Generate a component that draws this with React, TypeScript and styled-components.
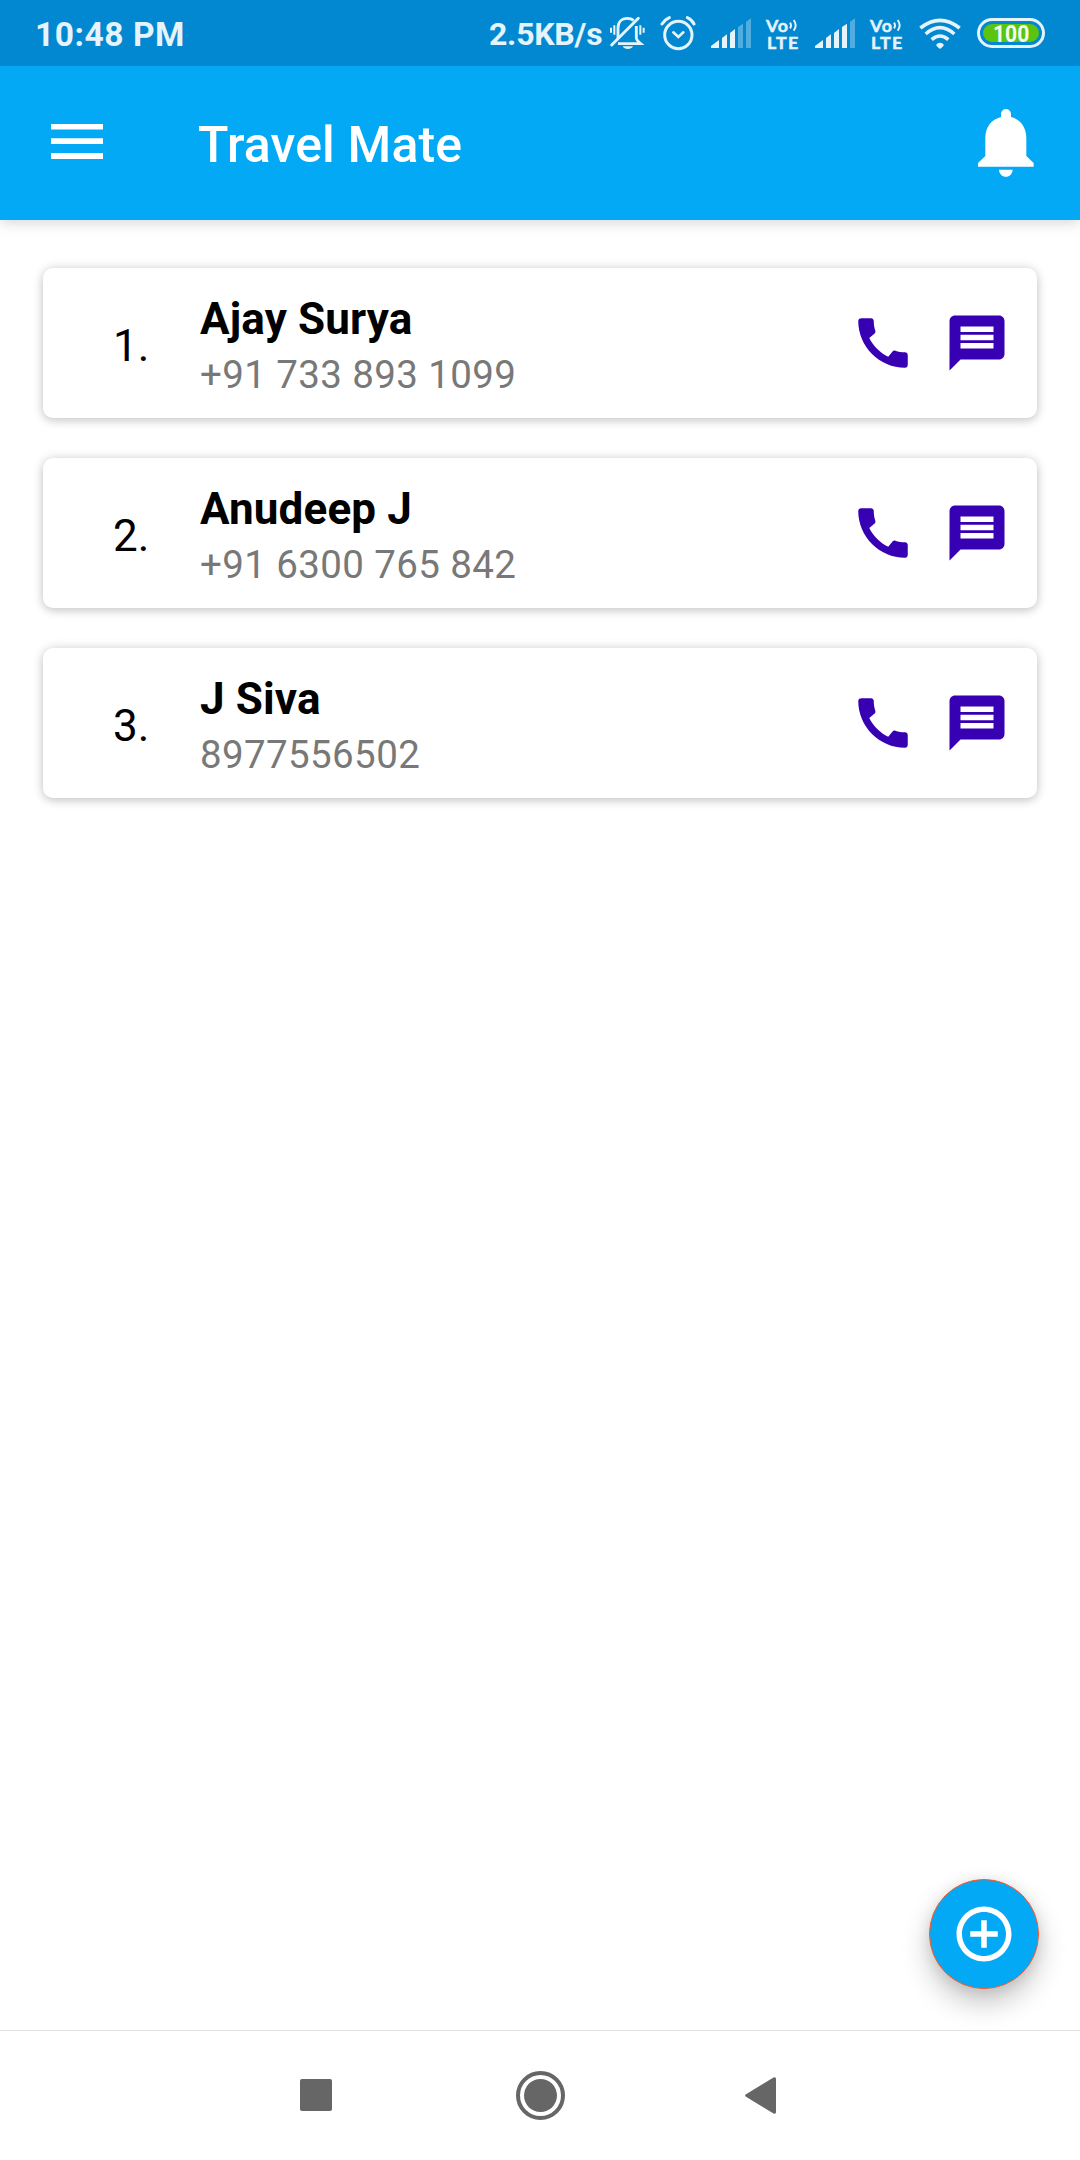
import React from "react";
import styled, { createGlobalStyle } from "styled-components";

const GlobalStyle = createGlobalStyle`
  *, *::before, *::after { box-sizing: border-box; }
  html, body { margin: 0; padding: 0; background: #fff; }
  body { font-family: Roboto, "Liberation Sans", sans-serif; }
  svg { display: block; flex: none; }
`;

const Screen = styled.div`
  width: 1080px;
  height: 2160px;
  display: flex;
  flex-direction: column;
  background: #fff;
  overflow: hidden;
`;

const StatusBar = styled.header`
  position: relative;
  z-index: 1;
  height: 66px;
  flex: none;
  display: flex;
  align-items: center;
  justify-content: space-between;
  padding: 0 35px 0 35px;
  background: #0288d1;
  color: #e6f3fa;
`;

const Clock = styled.span`
  font-size: 33.5px;
  font-weight: 700;
  line-height: 40px;
  letter-spacing: 0.55px;
  padding-top: 3px;
`;

const StatusIcons = styled.div`
  display: flex;
  align-items: center;
`;

const NetSpeed = styled.span`
  font-size: 32px;
  font-weight: 700;
  line-height: 40px;
  letter-spacing: -0.25px;
  padding-top: 2px;
  width: 121px;
  white-space: nowrap;
`;

const StatusGlyph = styled.div<{ $gap: number }>`
  margin-left: ${(p) => p.$gap}px;
`;

const Volte = styled.div`
  width: 34px;
  height: 34px;
  margin-left: 15px;
  padding-top: 1px;
  display: flex;
  flex-direction: column;
  justify-content: space-between;
  font-family: Lato, sans-serif;
  font-weight: 700;
  font-size: 17.8px;
  line-height: 16px;
  -webkit-text-stroke: 0.5px currentColor;
`;

const VolteTop = styled.div`
  height: 16px;
  display: flex;
  align-items: center;
  letter-spacing: 0.9px;
`;

const VolteBottom = styled.div`
  height: 16px;
  padding-left: 1px;
  letter-spacing: 1.3px;
  white-space: nowrap;
`;

const Battery = styled.div`
  width: 68px;
  height: 30px;
  margin-left: 16px;
  padding: 3px;
  border: 3px solid #e6f3fa;
  border-radius: 15px;
  display: flex;
`;

const BatteryLevel = styled.div`
  flex: 1;
  display: flex;
  align-items: center;
  justify-content: center;
  border-radius: 9px;
  background: #5ac411;
`;

const BatteryText = styled.span`
  padding-top: 1px;
  color: #f3faee;
  font-size: 24.5px;
  font-weight: 700;
  line-height: 18px;
  transform: scaleX(0.86);
`;

const AppBar = styled.div`
  height: 154px;
  flex: none;
  display: flex;
  align-items: center;
  padding: 0 46px 0 51px;
  background: #03a9f4;
  box-shadow: 0 2px 14px rgba(0, 0, 0, 0.18);
`;

const MenuButton = styled.div`
  width: 52px;
  margin-bottom: 3px;
`;

const Title = styled.h1`
  flex: 1;
  margin: 0 0 0 95px;
  padding-top: 3px;
  color: #fff;
  font-size: 50px;
  font-weight: 500;
  line-height: 60px;
  letter-spacing: 0.15px;
`;

const Content = styled.main`
  flex: 1;
  display: flex;
  flex-direction: column;
  justify-content: space-between;
  padding: 48px 41px 41px 43px;
`;

const ContactList = styled.div`
  display: flex;
  flex-direction: column;
  gap: 40px;
  padding-right: 2px;
`;

const Card = styled.article`
  height: 150px;
  display: flex;
  align-items: center;
  padding: 0 27px 0 70px;
  border-radius: 10px;
  background: #fff;
  box-shadow: 0 3px 10px rgba(0, 0, 0, 0.15), 0 0 12px rgba(0, 0, 0, 0.12);
`;

const Index = styled.span`
  width: 87px;
  padding-top: 5px;
  font-size: 44px;
  line-height: 52px;
  color: #000;
`;

const Details = styled.div`
  flex: 1;
  display: flex;
  flex-direction: column;
  padding-top: 6px;
`;

const Name = styled.span`
  font-size: 44px;
  font-weight: 700;
  line-height: 56px;
  letter-spacing: 0.15px;
  color: #000;
`;

const Phone = styled.span`
  padding-top: 1px;
  margin-bottom: -1px;
  font-size: 38.5px;
  line-height: 54px;
  letter-spacing: 0.38px;
  color: #787878;
`;

const Actions = styled.div`
  display: flex;
  gap: 28px;
  color: #3700b3;
`;

const AddButton = styled.div`
  width: 110px;
  height: 110px;
  align-self: flex-end;
  display: flex;
  align-items: center;
  justify-content: center;
  border: 1px solid #ff5722;
  border-radius: 50%;
  background: #03a9f4;
  color: #fff;
  box-shadow: 0 14px 28px rgba(0, 0, 0, 0.22), 0 2px 14px rgba(0, 0, 0, 0.1);
`;

const NavBar = styled.nav`
  height: 130px;
  flex: none;
  display: flex;
  align-items: center;
  padding: 0 0 0 300px;
  border-top: 1px solid #e2e2e2;
  color: #666;
`;

const RecentKey = styled.div`
  width: 32px;
  height: 32px;
  margin-bottom: 1px;
  border-radius: 2px;
  background: currentColor;
`;

const HomeKey = styled.div`
  margin-left: 184px;
`;

const BackKey = styled.div`
  margin-left: 180px;
`;

function MuteBell() {
  return (
    <svg width="36" height="34" viewBox="389 48 108 102" fill="none" stroke="currentColor">
      <path d="M413 117 V84 C413 66 424 55 441 55 C449 55 455 57 460 61" strokeWidth="8.5" />
      <path d="M468 78 V113 C468 120 474 125 481 131 H413" strokeWidth="8.5" />
      <path d="M394 135 L474 55" strokeWidth="8.5" strokeLinecap="round" />
      <path d="M427 139 H458 C453 150 432 150 427 139Z" fill="currentColor" stroke="none" />
      <path d="M392 83V98M402 76V104M480 76V104M490 83V98" strokeWidth="6" />
    </svg>
  );
}

function Alarm() {
  return (
    <svg width="36" height="36" viewBox="539 45 108 108" fill="none" stroke="currentColor" strokeLinecap="round">
      <circle cx="594" cy="105" r="41" strokeWidth="9" />
      <path d="M579 97 L594 111 L609 97" strokeWidth="8" />
      <path d="M545 72 Q553 59 567 53M621 53 Q635 59 641 72" strokeWidth="9" />
    </svg>
  );
}

function Signal({ level }: { level: number }) {
  const bars = [
    "M0 87 V81 L24 63 V87Z",
    "M33 87 V57 L48 46 V87Z",
    "M57 87 V42 L72 30 V87Z",
    "M81 87 V24 L96 14 V87Z",
    "M105 87 V8 L120 -2 V87Z",
  ];
  return (
    <svg width="40" height="30" viewBox="0 -3 120 90" fill="currentColor">
      {bars.map((d, i) => (
        <path key={d} d={d} opacity={i < level ? 1 : 0.35} />
      ))}
    </svg>
  );
}

function VoLte() {
  return (
    <Volte>
      <VolteTop>
        <span>Vo</span>
        <svg width="9" height="14" viewBox="0 0 27 42" fill="none" stroke="currentColor" strokeWidth="6">
          <path d="M3 14 Q9 22 3 31M14 6 Q26 22 14 38" />
        </svg>
      </VolteTop>
      <VolteBottom>LTE</VolteBottom>
    </Volte>
  );
}

function Wifi() {
  return (
    <svg width="42" height="31" viewBox="417 52 126 93" fill="none" stroke="currentColor" strokeWidth="10.5">
      <path d="M421 82 Q480 36 539 82M437 100 Q480 62 523 100M455 117 Q480 95 505 117" />
      <path d="M476 142 L470 136 C466 131 473 126 480 126 C487 126 494 131 490 136 L484 142 Q480 146 476 142Z" fill="currentColor" stroke="none" />
    </svg>
  );
}

function PhoneIcon() {
  return (
    <svg width="66" height="66" viewBox="0 0 24 24" fill="currentColor">
      <path d="M20.01 15.38c-1.23 0-2.42-.2-3.53-.56-.35-.12-.74-.03-1.01.24l-1.57 1.97c-2.83-1.35-5.48-3.9-6.89-6.83l1.95-1.66c.27-.28.35-.67.24-1.02-.37-1.11-.56-2.3-.56-3.53 0-.54-.45-.99-.99-.99H4.19C3.65 3 3 3.24 3 3.99 3 13.28 10.73 21 20.01 21c.71 0 .99-.63.99-1.18v-3.45c0-.54-.45-.99-.99-.99z" />
    </svg>
  );
}

function MessageIcon() {
  return (
    <svg width="66" height="66" viewBox="0 0 24 24" fill="currentColor">
      <path d="M20 2H4c-1.1 0-1.99.9-1.99 2L2 22l4-4h14c1.1 0 2-.9 2-2V4c0-1.1-.9-2-2-2zm-2 12H6v-2h12v2zm0-3H6V9h12v2zm0-3H6V6h12v2z" />
    </svg>
  );
}

const contacts = [
  { name: "Ajay Surya", phone: "+91 733 893 1099" },
  { name: "Anudeep J", phone: "+91 6300 765 842" },
  { name: "J Siva", phone: "8977556502" },
];

export default function App() {
  return (
    <>
      <GlobalStyle />
      <Screen>
        <StatusBar>
          <Clock>10:48 PM</Clock>
          <StatusIcons>
            <NetSpeed>2.5KB/s</NetSpeed>
            <StatusGlyph $gap={0}><MuteBell /></StatusGlyph>
            <StatusGlyph $gap={14}><Alarm /></StatusGlyph>
            <StatusGlyph $gap={15}><Signal level={3} /></StatusGlyph>
            <VoLte />
            <StatusGlyph $gap={15}><Signal level={4} /></StatusGlyph>
            <VoLte />
            <StatusGlyph $gap={15}><Wifi /></StatusGlyph>
            <Battery>
              <BatteryLevel>
                <BatteryText>100</BatteryText>
              </BatteryLevel>
            </Battery>
          </StatusIcons>
        </StatusBar>
        <AppBar>
          <MenuButton>
            <svg width="52" height="35" viewBox="0 0 52 35" fill="#fff">
              <path d="M0 0H52V5.500H0ZM0 14.300H52V20H0ZM0 29H52V35H0Z" />
            </svg>
          </MenuButton>
          <Title>Travel Mate</Title>
          <svg width="55.67" height="68" viewBox="233 88 167 204" fill="#fff">
            <path d="M302 112V103A15 15 0 0 1 332 103V112C361 119 378 143 378 175V229L400 250V261H233V250L255 229V175C255 143 273 119 302 112Z" />
            <path d="M296 270H337C336 283 328 291 316.500 291C305 291 297 283 296 270Z" />
          </svg>
        </AppBar>
        <Content>
          <ContactList>
            {contacts.map((c, i) => (
              <Card key={c.phone}>
                <Index>{i + 1}.</Index>
                <Details>
                  <Name>{c.name}</Name>
                  <Phone>{c.phone}</Phone>
                </Details>
                <Actions>
                  <PhoneIcon />
                  <MessageIcon />
                </Actions>
              </Card>
            ))}
          </ContactList>
          <AddButton>
            <svg width="66" height="66" viewBox="0 0 24 24" fill="currentColor">
              <path d="M13 7h-2v4H7v2h4v4h2v-4h4v-2h-4V7zm-1-5C6.480 2 2 6.480 2 12s4.480 10 10 10 10-4.480 10-10S17.520 2 12 2zm0 18c-4.410 0-8-3.590-8-8s3.590-8 8-8 8 3.590 8 8-3.590 8-8 8z" />
            </svg>
          </AddButton>
        </Content>
        <NavBar>
          <RecentKey />
          <HomeKey>
            <svg width="49" height="49" viewBox="0 0 49 49" fill="none" stroke="currentColor">
              <circle cx="24.500" cy="24.500" r="22.500" strokeWidth="4" />
              <circle cx="24.500" cy="24.500" r="16.500" fill="currentColor" stroke="none" />
            </svg>
          </HomeKey>
          <BackKey>
            <svg width="31" height="37" viewBox="0 0 31 37" fill="currentColor">
              <path d="M1 17.300L28.500 .600Q31 -.300 31 2V35Q31 37.300 28.500 36.400L1 19.700Q-.800 18.500 1 17.300Z" />
            </svg>
          </BackKey>
        </NavBar>
      </Screen>
    </>
  );
}
